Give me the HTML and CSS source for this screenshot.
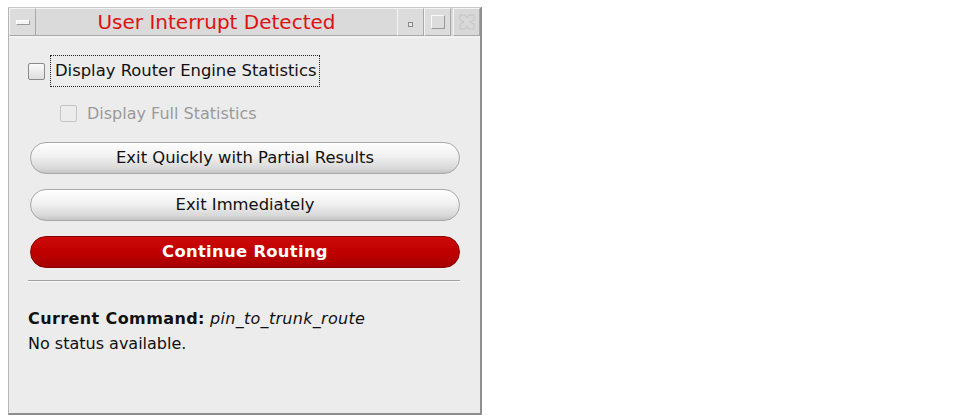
FILE: index.html
```html
<!DOCTYPE html>
<html>
<head>
<meta charset="utf-8">
<link rel="stylesheet" href="styles.css">
</head>
<body>
<div class="window">
  <div class="titlebar">
    <div class="tb-btn menu"><span class="menu-bar"></span></div>
    <div class="title">User Interrupt Detected</div>
    <div class="tb-btn mini"><span class="mini-dot"></span></div>
    <div class="tb-btn maxi"><span class="maxi-box"></span></div>
    <div class="tb-btn close">
      <svg width="20" height="20" viewBox="0 0 20 20">
        <path d="M3 3 L8 3 L10 6 L12 3 L17 3 L17 8 L13 10 L17 12 L17 17 L12 17 L10 14 L8 17 L3 17 L3 12 L7 10 L3 8 Z" fill="none" stroke="#c4c4c4" stroke-width="1"/>
      </svg>
    </div>
  </div>
  <div class="content">
    <div class="check-row focus">
      <span class="box"></span>
      <span class="label">Display Router Engine Statistics</span>
    </div>
    <div class="check-row sub disabled">
      <span class="box"></span>
      <span class="label">Display Full Statistics</span>
    </div>
    <div class="buttons">
      <div class="btn">Exit Quickly with Partial Results</div>
      <div class="btn">Exit Immediately</div>
      <div class="btn red">Continue Routing</div>
    </div>
    <div class="sep"></div>
    <div class="status">
      <div><b>Current Command:</b> <i>pin_to_trunk_route</i></div>
      <div>No status available.</div>
    </div>
  </div>
</div>
</body>
</html>
```
FILE: styles.css
```css
html, body { margin: 0; padding: 0; background: #fff; }
body { font-family: "DejaVu Sans", sans-serif; color: #111; }
.window {
  position: relative;
  margin: 7px 0 0 8px;
  width: 474px;
  height: 408px;
  box-sizing: border-box;
  border-left: 1px solid #b4b4b4;
  border-top: 1px solid #c8c8c8;
  border-right: 2px solid #8e8e8e;
  border-bottom: 2px solid #8e8e8e;
  background: #ececec;
  display: flex;
  flex-direction: column;
}
.titlebar {
  height: 28px;
  display: flex;
  background: #dadada;
  border-bottom: 2px solid #f2f2f2;
}
.tb-btn {
  width: 27px;
  height: 28px;
  box-sizing: border-box;
  border: 1px solid #f4f4f4;
  border-right-color: #a8a8a8;
  border-bottom-color: #a8a8a8;
  display: flex; align-items: center; justify-content: center;
  background: #dcdcdc;
}
.menu-bar { width: 14px; height: 5px; background: #f4f4f4; border: 1px solid #999; box-sizing: border-box; border-top-color:#fff; border-left-color:#fff;}
.mini-dot { width: 5px; height: 5px; background: #e8e8e8; border: 1px solid #888; box-sizing: border-box; margin-top: 4px; }
.maxi-box { width: 14px; height: 14px; border: 1px solid #f8f8f8; border-right-color: #999; border-bottom-color: #999; box-sizing: border-box; }
.close { background: #d8d8d8; margin-left: 2px; }
.title {
  flex: 1;
  text-align: center;
  color: #dd1111;
  font-size: 20px;
  line-height: 26px;
  border-top: 1px solid #f4f4f4;
  border-bottom: 1px solid #a8a8a8;
  box-sizing: border-box;
  height: 28px;
}
.content { padding: 17px 20px 0 19px; display: flex; flex-direction: column; }
.check-row { display: flex; align-items: center; font-size: 16px; }
.check-row.focus { height: 32px; font-size: 16.4px; }
.check-row.focus .label { border: 1px dotted #222; padding: 5px 3px 6px 4px; margin-left: 5px; }
.box {
  width: 17px; height: 17px; box-sizing: border-box;
  border: 1px solid #8a8a8a;
  border-radius: 2px;
  background: linear-gradient(#fafafa, #dedede);
}
.check-row.sub { margin: 15px 0 0 32px; height: 22px; }
.check-row.sub .label { margin-left: 10px; }
.disabled { color: #9a9a9a; }
.disabled .box { border-color: #c4c4c4; background: #ececec; }
.buttons { margin-top: 18px; display: flex; flex-direction: column; gap: 15px; padding-left: 2px; }
.btn {
  height: 32px; box-sizing: border-box;
  border-radius: 16px;
  border: 1px solid #a8a8a8;
  background: linear-gradient(#ffffff 0%, #f0f0f0 45%, #d8d8d8 85%, #c4c4c4 100%);
  text-align: center;
  line-height: 30px;
  font-size: 16.4px;
  color: #111;
}
.btn.red {
  background: linear-gradient(#cc0a0a 0%, #c00000 50%, #a60000 100%);
  border-color: #8a0000;
  color: #fff;
  font-weight: bold;
  letter-spacing: 0.3px;
}
.sep { margin-top: 12px; height: 1px; background: #a0a0a0; border-bottom: 1px solid #fafafa; }
.status { margin-top: 24px; font-size: 16px; line-height: 25px; }
.status b { font-weight: bold; letter-spacing: 0.4px; }
.status i { letter-spacing: 0.3px; }
```
